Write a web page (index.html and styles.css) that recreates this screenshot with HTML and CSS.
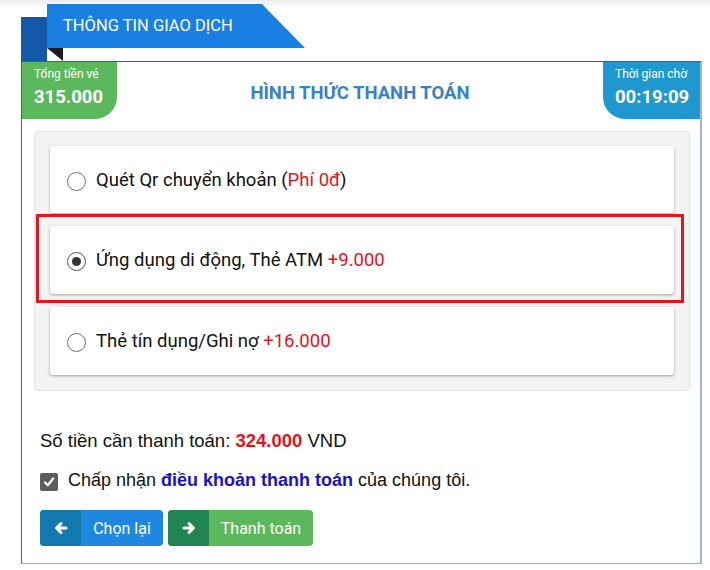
FILE: index.html
```html
<!DOCTYPE html>
<html lang="vi">
<head>
<meta charset="utf-8">
<title>Thông tin giao dịch</title>
<link rel="stylesheet" href="styles.css">
</head>
<body>
<div class="topshade"></div>
<div class="head">
  <div class="head-side"></div>
  <div class="head-col">
    <div class="ribbon">THÔNG TIN GIAO DỊCH</div>
    <div class="fold"></div>
  </div>
</div>
<div class="box">
  <div class="toprow">
    <div class="badge badge-green">
      <div class="badge-label">Tổng tiền vé</div>
      <div class="badge-value">315.000</div>
    </div>
    <div class="title">HÌNH THỨC THANH TOÁN</div>
    <div class="badge badge-blue">
      <div class="badge-label">Thời gian chờ</div>
      <div class="badge-value">00:19:09</div>
    </div>
  </div>
  <div class="panel">
    <label class="card">
      <span class="radio"></span>
      <span class="opt">Quét Qr chuyển khoản (<span class="red">Phí 0đ</span>)</span>
    </label>
    <label class="card card-selected">
      <span class="radio radio-on"><span class="dot"></span></span>
      <span class="opt">Ứng dụng di động, Thẻ ATM <span class="red">+9.000</span></span>
      <span class="highlight"></span>
    </label>
    <label class="card">
      <span class="radio"></span>
      <span class="opt">Thẻ tín dụng/Ghi nợ <span class="red">+16.000</span></span>
    </label>
  </div>
  <div class="total">Số tiền cần thanh toán: <b class="amount">324.000</b> VND</div>
  <div class="agree">
    <span class="check">
      <svg width="12" height="12" viewBox="0 0 12 12"><path d="M2 6.5 L4.8 9.2 L10.2 2.5" fill="none" stroke="#fff" stroke-width="2.2" stroke-linecap="round" stroke-linejoin="round"/></svg>
    </span>
    <span>Chấp nhận <b class="link">điều khoản thanh toán</b> của chúng tôi.</span>
  </div>
  <div class="buttons">
    <button class="btn btn-blue">
      <span class="btn-icon">
        <svg width="14" height="14" viewBox="0 0 14 14"><path d="M12 7 H3 M7 2.5 L2.5 7 L7 11.5" fill="none" stroke="#fff" stroke-width="3" stroke-linecap="round" stroke-linejoin="round"/></svg>
      </span>
      <span class="btn-text">Chọn lại</span>
    </button>
    <button class="btn btn-green">
      <span class="btn-icon">
        <svg width="14" height="14" viewBox="0 0 14 14"><path d="M2 7 H11 M7 2.5 L11.5 7 L7 11.5" fill="none" stroke="#fff" stroke-width="3" stroke-linecap="round" stroke-linejoin="round"/></svg>
      </span>
      <span class="btn-text">Thanh toán</span>
    </button>
  </div>
</div>
</body>
</html>
```
FILE: styles.css
```css
* { box-sizing: border-box; }
html, body { margin: 0; padding: 0; background: #fff; }
body {
  font-family: Roboto, "Liberation Sans", Arial, sans-serif;
  color: #222;
  width: 710px;
  height: 570px;
  overflow: hidden;
  position: relative;
}
.topshade {
  position: absolute;
  left: 0; top: 0; right: 0;
  height: 8px;
  background: linear-gradient(#ececec, rgba(255,255,255,0));
}
.head {
  position: relative;
  display: flex;
  height: 57px;
  margin: 4px 0 0 21px;
}
.head-side {
  width: 26px;
  margin-top: 13px;
  background: #1557a8;
}
.head-col { display: flex; flex-direction: column; }
.ribbon {
  width: 258px;
  height: 44px;
  background: #1a7fe3;
  color: #fff;
  font-size: 16.5px;
  line-height: 44px;
  padding-left: 16px;
  clip-path: polygon(0 0, 215px 0, 258px 44px, 0 44px);
}
.fold {
  width: 16px;
  height: 13px;
  background: #1c1c1c;
  clip-path: polygon(0 0, 100% 0, 100% 100%);
}
.box {
  margin-left: 21px;
  width: 681px;
  height: 503px;
  border-top: 1px solid #2f62a0;
  border-left: 1px solid #3a68a0;
  border-right: 2px solid #9db8dc;
  border-bottom: 1px solid #8eabd2;
}
.toprow {
  display: flex;
  align-items: flex-start;
  height: 57px;
}
.badge {
  color: #fff;
  height: 57px;
  padding-top: 5px;
}
.badge-green {
  width: 95px;
  background: #5cb85c;
  border-bottom-right-radius: 22px;
  padding-left: 12px;
}
.badge-blue {
  width: 97px;
  background: #1f97cf;
  border-bottom-left-radius: 22px;
  padding-left: 12px;
}
.badge-label { font-size: 12px; line-height: 14px; }
.badge-value { font-size: 18.5px; font-weight: 700; line-height: 20px; margin-top: 6px; }
.title {
  flex: 1;
  text-align: center;
  color: #3b80c3;
  font-weight: 700;
  font-size: 18.5px;
  line-height: 20px;
  padding-top: 21px;
}
.panel {
  margin: 12px 10px 0 12px;
  background: #f4f4f4;
  border: 1px solid #e4e4e4;
  border-radius: 4px;
  padding: 14px 15px 15px 15px;
  display: flex;
  flex-direction: column;
  gap: 13px;
}
.card {
  position: relative;
  display: flex;
  align-items: center;
  height: 68px;
  background: #fff;
  border-radius: 3px;
  box-shadow: 0 1px 3px rgba(0,0,0,0.35);
  padding-left: 17px;
  font-size: 18.5px;
  color: #111;
}
.card:first-child { height: 67px; }
.radio {
  width: 19px;
  height: 19px;
  border: 1px solid #6f6f6f;
  border-radius: 50%;
  background: #fff;
  margin-right: 10px;
  margin-top: 3px;
  display: flex;
  align-items: center;
  justify-content: center;
}
.radio-on { border-color: #555; }
.dot { width: 9px; height: 9px; border-radius: 50%; background: #333; }
.red { color: #e3131b; }
.highlight {
  position: absolute;
  left: -14px;
  right: -10px;
  top: -12px;
  bottom: -9px;
  border: 3px solid #e8141c;
  pointer-events: none;
}
.total {
  margin: 38px 0 0 18px;
  font-family: "Liberation Sans", Arial, sans-serif;
  font-size: 18.5px;
  line-height: 24px;
  color: #111;
}
.amount { color: #e3131b; }
.agree {
  display: flex;
  align-items: center;
  margin: 15px 0 0 18px;
  font-family: "Liberation Sans", Arial, sans-serif;
  font-size: 18px;
  line-height: 24px;
  color: #111;
}
.check {
  width: 18px;
  height: 18px;
  border-radius: 2px;
  background: #5d5d5d;
  display: flex;
  align-items: center;
  justify-content: center;
  margin-right: 10px;
  margin-top: 3px;
}
.link { color: #1a11c9; }
.buttons {
  display: flex;
  gap: 5px;
  margin: 18px 0 0 18px;
}
.btn {
  display: flex;
  height: 36px;
  padding: 0;
  border: 0;
  border-radius: 4px;
  overflow: hidden;
  font-family: inherit;
  font-size: 16px;
  color: #fff;
  cursor: pointer;
}
.btn-icon {
  width: 41px;
  display: flex;
  align-items: center;
  justify-content: center;
}
.btn-text {
  display: flex;
  align-items: center;
  justify-content: center;
}
.btn-blue { width: 123px; background: #1f87e0; }
.btn-blue .btn-icon { background: #127aac; }
.btn-blue .btn-text { flex: 1; }
.btn-green { width: 145px; background: #5bb85c; }
.btn-green .btn-icon { background: #208552; }
.btn-green .btn-text { flex: 1; }
```
